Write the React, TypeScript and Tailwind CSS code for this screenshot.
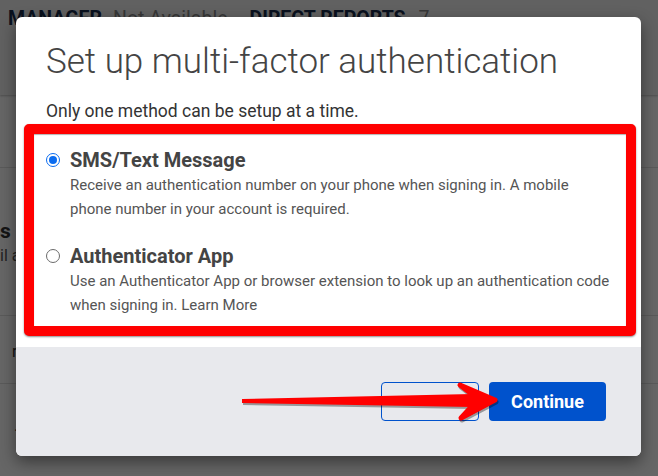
import React from "react";

function Radio({ checked }: { checked: boolean }) {
  if (checked) {
    return (
      <span className="mt-[5px] flex h-[14px] w-[14px] shrink-0 items-center justify-center rounded-full border-[1.5px] border-[#0b6cf0] bg-white">
        <span className="h-[8px] w-[8px] rounded-full bg-[#0b6cf0]" />
      </span>
    );
  }
  return <span className="mt-[5px] h-[14px] w-[14px] shrink-0 rounded-full border border-[#6b6b6b] bg-white" />;
}

function Option({ checked, title, line1, line2 }: { checked: boolean; title: string; line1: string; line2: string }) {
  return (
    <div className="flex gap-[10px]">
      <Radio checked={checked} />
      <div className="flex flex-col">
        <div className="text-[20px] font-bold leading-[24px] text-[#444]">{title}</div>
        <div className="mt-[2px] text-[15px] leading-[23.5px] text-[#555]">
          {line1}
          <br />
          {line2}
        </div>
      </div>
    </div>
  );
}

export default function App() {
  return (
    <div className="relative h-[476px] w-[658px] overflow-hidden bg-white font-['Roboto',sans-serif]">
      {/* page behind */}
      <div className="flex flex-col">
        <div className="h-[95px] bg-[#f2f2f2] pl-[8px] pt-[7px] shadow-[0_1px_2px_rgba(0,0,0,0.25)]">
          <div className="flex items-baseline text-[19.5px] leading-[23px]">
            <span className="font-bold text-[#172b4d]">MANAGER</span>
            <span className="ml-[11px] text-[#8a8a8a]">Not Available</span>
            <span className="ml-[22px] font-bold text-[#172b4d]">DIRECT REPORTS</span>
            <span className="ml-[13px] text-[#8a8a8a]">7</span>
          </div>
        </div>
        <div className="h-[73px] border-b border-[#e0e0e0]" />
        <div className="flex h-[148px] flex-col border-b border-[#e0e0e0] pt-[50px]">
          <div className="text-[21px] font-bold leading-[26px] text-[#333]">s</div>
          <div className="text-[16px] leading-[24px] text-[#555]">il a</div>
        </div>
        <div className="h-[68px] border-b border-[#e0e0e0] pl-[12px] pt-[26px] text-[16px] leading-[20px] text-[#333]">
          r
        </div>
        <div className="pl-[14px] pt-[30px] text-[16px] text-[#333]">.</div>
      </div>

      {/* overlay */}
      <div className="absolute inset-0 bg-black/60" />

      {/* modal */}
      <div className="absolute left-[16px] top-[17px] flex h-[439px] w-[625px] flex-col overflow-hidden rounded-[6px] bg-white shadow-[0_6px_16px_rgba(0,0,0,0.45)]">
        <div className="flex flex-col pb-[1px] pl-[30px] pt-[25px]">
          <h1 className="text-[35px] font-light leading-[40px] text-[#444]">Set up multi-factor authentication</h1>
          <p className="mt-[17px] text-[17.5px] leading-[24px] text-[#333]">Only one method can be setup at a time.</p>
        </div>
        <div className="ml-[8px] mr-[5px] flex h-[212px] flex-col gap-[23px] rounded-[5px] border-[10px] border-[#ff0000] bg-white pl-[12px] pr-[8px] pt-[14px] shadow-[0_1px_2px_rgba(0,0,0,0.45),inset_0_1px_1px_rgba(0,0,0,0.3)]">
          <Option
            checked
            title="SMS/Text Message"
            line1="Receive an authentication number on your phone when signing in. A mobile"
            line2="phone number in your account is required."
          />
          <Option
            checked={false}
            title="Authenticator App"
            line1="Use an Authenticator App or browser extension to look up an authentication code"
            line2="when signing in. Learn More"
          />
        </div>
        <div className="mt-[11px] flex flex-1 items-start justify-end gap-[10px] bg-[#e8e9ed] pr-[35px] pt-[35px]">
          <button className="h-[39px] w-[98px] rounded-[4px] border border-[#0052cc] pt-[1px] text-[13px] font-bold text-[#0052cc]">
            Cancel
          </button>
          <button className="h-[39px] w-[117px] rounded-[4px] bg-[#0052cc] text-[18px] font-bold text-white">
            Continue
          </button>
        </div>
      </div>

      {/* annotation arrow */}
      <svg className="absolute inset-0" width="658" height="476" viewBox="0 0 658 476">
        <g transform="translate(1,2)" fill="rgba(0,0,0,0.35)" stroke="rgba(0,0,0,0.35)" strokeLinejoin="round" strokeWidth="5">
          <polygon points="242,399 472,394 472,407 242,403" strokeWidth="0" />
          <polygon points="460,385 495,400 461,418 473,405 473,395" />
        </g>
        <g fill="#ff0000" stroke="#ff0000" strokeLinejoin="round" strokeWidth="5">
          <polygon points="242,399 472,394 472,407 242,403" strokeWidth="0" />
          <polygon points="460,385 495,400 461,418 473,405 473,395" />
        </g>
      </svg>
    </div>
  );
}
